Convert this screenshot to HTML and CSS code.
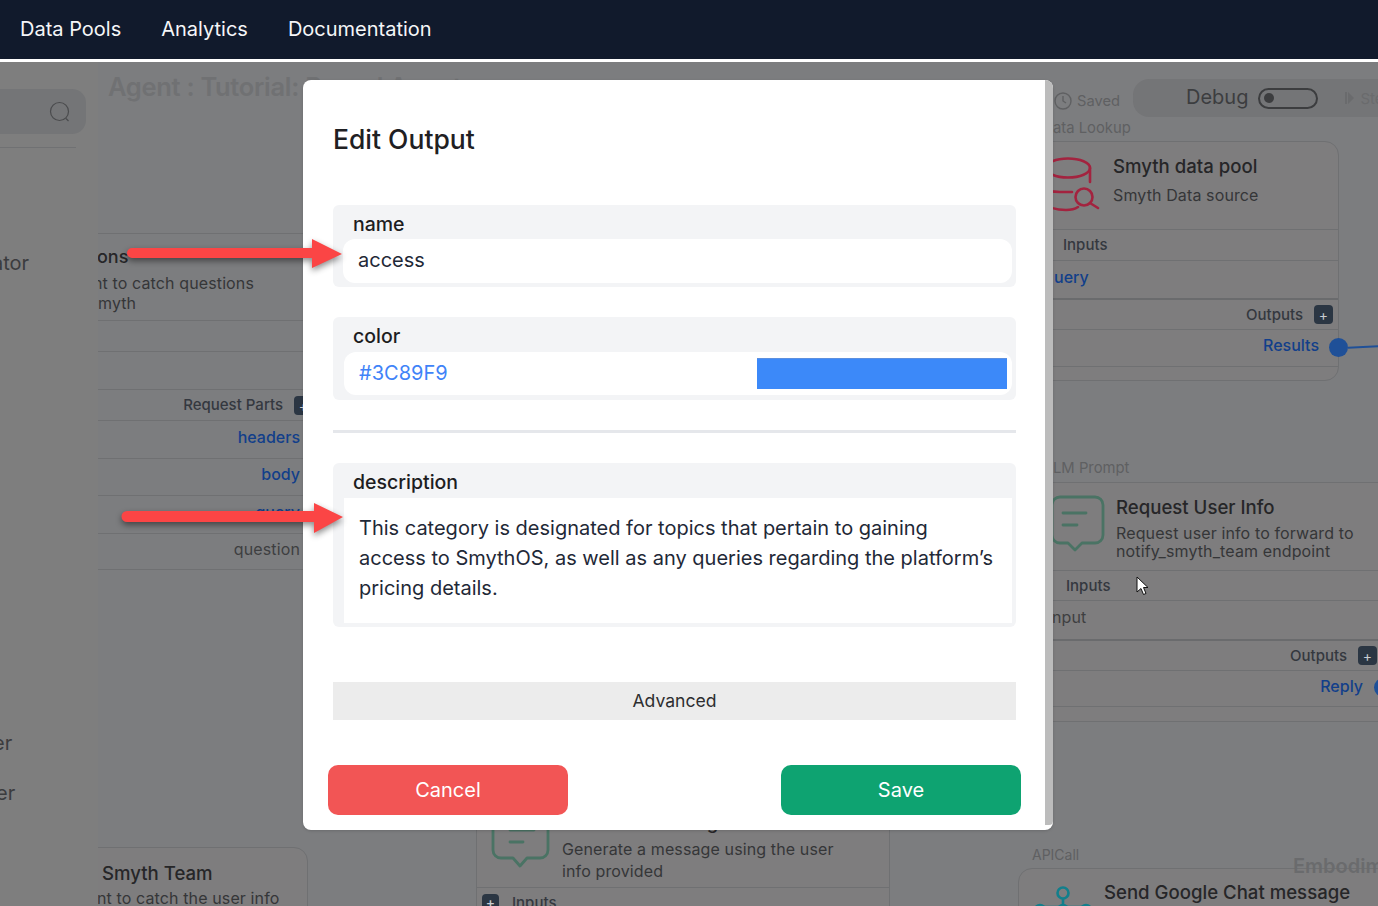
FILE: index.html
```html
<!DOCTYPE html>
<html lang="en">
<head>
    <meta charset="UTF-8">
    <title>Edit Output</title>
    <link rel="stylesheet" href="styles.css">
</head>
<body>

<nav class="topnav">
    <a>Data Pools</a>
    <a>Analytics</a>
    <a>Documentation</a>
</nav>

<main class="canvas">
    <!-- left sidebar, mostly hidden -->
    <aside class="sidebar">
        <div class="search">
            <svg width="24" height="24" viewBox="0 0 24 24" fill="none" stroke="#4a4b4d" stroke-width="1.2"><circle cx="11.500" cy="11.500" r="9"/><path d="M18 18.500l2.500 2.500"/></svg>
        </div>
        <div class="search-line"></div>
        <span class="side-item side-a">ator</span>
        <span class="side-item side-b">er</span>
        <span class="side-item side-c">er</span>
    </aside>

    <h1 class="agent-title">Agent : Tutorial: Bound Agent</h1>

    <!-- left node -->
    <div class="node node-left">
        <div class="left-head">
            <b>ons</b>
            <p>nt to catch questions<br><span class="left-myth">myth</span></p>
        </div>
        <div class="row h31"></div>
        <div class="row h38"></div>
        <div class="row h31 gap"><span class="row-label">Request Parts</span><i class="plus">+</i></div>
        <div class="row h38"><span class="port">headers</span></div>
        <div class="row h37"><span class="port">body</span></div>
        <div class="row h38"><span class="port">query</span></div>
        <div class="row h37"><span class="port-plain">question</span></div>
    </div>

    <div class="node node-team">
        <b>Smyth Team</b>
        <p>nt to catch the user info</p>
    </div>

    <!-- middle node under the dialog -->
    <div class="node node-generate">
        <div class="gen-head">
            <svg class="gen-icon" width="70" height="50" viewBox="0 0 70 50" fill="none" stroke="#4a7364" stroke-width="2.800" stroke-linecap="round" stroke-linejoin="round"><path d="M7 0v30a8 8 0 0 0 8 8h12l7 8 7-8h13a8 8 0 0 0 8-8V0"/><path d="M24 10h24M24 22h13"/></svg>
            <h3>Generate message</h3>
            <p>Generate a message using the user<br>info provided</p>
        </div>
        <div class="gen-inputs"><i class="plus">+</i><span>Inputs</span></div>
    </div>

    <div class="saved">
        <svg width="20" height="20" viewBox="0 0 20 20" fill="none" stroke="#5f6062" stroke-width="1.400"><circle cx="10" cy="10" r="8"/><path d="M10 5v5l3 2"/></svg>
        <span>Saved</span>
    </div>
    <div class="debug-bar">
        <span class="debug-label">Debug</span>
        <span class="toggle"><i></i></span>
        <svg class="step-icon" width="10" height="12" viewBox="0 0 10 12" fill="#6a6b6d"><path d="M0 0h2v12H0zM3 0l6 6-6 6z"/></svg>
        <span class="step">Step</span>
    </div>

    <span class="node-tag tag-lookup">ata Lookup</span>
    <div class="node node-pool">
        <div class="pool-head">
            <svg class="pool-icon" width="60" height="64" viewBox="0 0 60 64" fill="none" stroke="#a3233f" stroke-width="2.600" stroke-linecap="round"><ellipse cx="28" cy="18" rx="22" ry="9.500"/><path d="M50 18v14M0 38c6 3 14 4 20 4h12M0 52c8 6 18 8 26 8 5 0 9-1 12-3"/><circle cx="44" cy="47" r="8.500"/><path d="M50 53l8 5"/></svg>
            <div class="node-text">
                <h3>Smyth data pool</h3>
                <p>Smyth Data source</p>
            </div>
        </div>
        <div class="row h31 indent"><span class="row-label">Inputs</span></div>
        <div class="row h38 indent-port"><span class="port">uery</span></div>
        <div class="row h31 gap thick"><span class="row-label">Outputs</span><i class="plus">+</i></div>
        <div class="row h38 pad-results"><span class="port">Results</span></div>
    </div>
    <span class="dot dot-results"></span>
    <span class="wire"></span>

    <span class="node-tag tag-prompt">LM Prompt</span>
    <div class="node node-request">
        <div class="pool-head req-head">
            <svg class="req-icon" width="70" height="64" viewBox="0 0 70 64" fill="none" stroke="#4a7364" stroke-width="2.800" stroke-linecap="round" stroke-linejoin="round"><path d="M20 7h35a8 8 0 0 1 8 8v30a8 8 0 0 1-8 8H42l-7 7-7-7H20a8 8 0 0 1-8-8V15a8 8 0 0 1 8-8z"/><path d="M23 23h23M23 35h14"/></svg>
            <div class="node-text req-text">
                <h3>Request User Info</h3>
                <p>Request user info to forward to<br>notify_smyth_team endpoint</p>
            </div>
        </div>
        <div class="row h30 indent-req"><span class="row-label">Inputs</span></div>
        <div class="row h39 indent-input"><span class="port-plain">nput</span></div>
        <div class="row h31 gap thick req-outputs"><span class="row-label">Outputs</span><i class="plus">+</i></div>
        <div class="row h37 req-reply"><span class="port">Reply</span></div>
    </div>
    <span class="dot dot-reply"></span>

    <span class="node-tag tag-api">APICall</span>
    <div class="node node-chat">
        <svg class="chat-icon" width="60" height="36" viewBox="0 0 60 36" fill="none" stroke="#127f8c" stroke-width="2.600"><circle cx="30" cy="8" r="5.500"/><path d="M30 14v11M7 22h46"/><circle cx="7" cy="25" r="5"/><circle cx="30" cy="25" r="5"/><circle cx="53" cy="25" r="5"/></svg>
        <h3>Send Google Chat message</h3>
    </div>
    <span class="embodiment">Embodiment</span>

    <!-- mouse pointer from the recording -->
    <svg class="cursor" width="14" height="20" viewBox="0 0 14 20"><path d="M1 1v15l4-3.500 2.500 6 2.500-1-2.500-6H12z" fill="#fff" stroke="#111" stroke-width="1"/></svg>
</main>

<!-- Dialog -->
<section class="modal">
    <h2>Edit Output</h2>

    <div class="field field-name">
        <label>name</label>
        <div class="input">access</div>
    </div>

    <div class="field field-color">
        <label>color</label>
        <div class="input input-color">
            <span>#3C89F9</span>
            <span class="swatch"></span>
        </div>
    </div>

    <hr class="divider">

    <div class="field field-desc">
        <label>description</label>
        <div class="textarea">This category is designated for topics that pertain to gaining access to SmythOS, as well as any queries regarding the platform’s pricing details.</div>
    </div>

    <div class="advanced">Advanced</div>

    <div class="actions">
        <button class="btn btn-cancel">Cancel</button>
        <button class="btn btn-save">Save</button>
    </div>
    <div class="scrollbar"></div>
</section>

<!-- Red annotation arrows -->
<svg class="arrow arrow-name" width="222" height="40" viewBox="0 0 222 40"><path d="M7 12H187V3L217 18 187 32V22H7a5 5 0 0 1 0-10z" fill="#fb4545"/></svg>
<svg class="arrow arrow-desc" width="228" height="40" viewBox="0 0 228 40"><path d="M9 13H196V5L225 19 196 35V24H9a5.500 5.500 0 0 1 0-11z" fill="#fb4545"/></svg>

</body>
</html>
```

FILE: styles.css
```css
* {
    box-sizing: border-box;
}

body {
    margin: 0;
    width: 1378px;
    height: 906px;
    overflow: hidden;
    position: relative;
    background-color: #fff;
    font-family: Inter, "Liberation Sans", sans-serif;
    color: #2c2c2e;
}

/* Top bar */
.topnav {
    height: 59px;
    background-color: #111a2c;
    display: flex;
    align-items: center;
    gap: 40px;
    padding: 0 0 2px 20px;
    color: #f5f6f8;
    font-size: 20px;
    font-weight: 400;
}

/* The dimmed editor behind the dialog */
.canvas {
    position: absolute;
    top: 62px;
    left: 0;
    width: 1378px;
    height: 844px;
    overflow: hidden;
    background-color: #7c7d7f;
}

.sidebar {
    position: absolute;
    z-index: 1;
    top: 0;
    left: 0;
    width: 98px;
    height: 844px;
    overflow: hidden;
    background-color: #7e7e7e;
}

.search {
    position: absolute;
    top: 27px;
    left: 0;
    width: 86px;
    height: 45px;
    background-color: #747577;
    border-radius: 0 14px 14px 0;
    display: flex;
    align-items: center;
    justify-content: flex-end;
    padding-right: 14px;
}

.search-line {
    position: absolute;
    top: 85px;
    left: 0;
    width: 76px;
    height: 1px;
    background-color: #707173;
}

.side-item {
    position: absolute;
    font-size: 20px;
    color: #3b3c3e;
}

.side-a { top: 189px; left: -8px; }
.side-b { top: 669px; left: -7px; }
.side-c { top: 719px; left: -4px; }

.agent-title {
    position: absolute;
    top: 9px;
    left: 108px;
    margin: 0;
    font-size: 25.500px;
    font-weight: 600;
    letter-spacing: -0.3px;
    color: #707173;
    white-space: nowrap;
}

/* Nodes */
.node {
    position: absolute;
    background-color: #7e7d7e;
    border: 1px solid #6f7072;
    border-radius: 14px;
}

.node h3 {
    margin: 0;
    font-size: 18.600px;
    font-weight: 500;
    color: #262628;
}

.node p {
    margin: 0;
    font-size: 16px;
    letter-spacing: 0.12px;
    line-height: 20px;
    color: #353638;
}

.row {
    display: flex;
    align-items: center;
    justify-content: flex-end;
    border-top: 1px solid #6f7072;
    font-size: 16px;
}

.h30 { height: 30px; }
.h31 { height: 31px; }
.h37 { height: 37px; }
.h38 { height: 38px; }
.h39 { height: 39px; }

.gap { gap: 11px; }
.thick { border-top: 2px solid #6a6b6d; }

.row-label {
    padding-bottom: 1px;
    font-size: 15px;
    font-weight: 500;
    color: #34383f;
}

.port {
    padding-bottom: 6px;
    font-size: 16px;
    font-weight: 500;
    color: #123f8a;
}

.port-plain {
    padding-bottom: 6px;
    font-size: 16px;
    letter-spacing: 0.12px;
    color: #3e3f41;
}

.plus {
    flex: none;
    width: 19px;
    height: 19px;
    background-color: #2b3643;
    border-radius: 4px;
    color: #c9ccd0;
    font-style: normal;
    font-size: 14px;
    line-height: 19px;
    text-align: center;
}

.dot {
    position: absolute;
    width: 19px;
    height: 19px;
    border-radius: 50%;
    background-color: #1f5098;
}

.node-left {
    top: 171px;
    left: 98px;
    width: 292px;
    height: 338px;
    overflow: hidden;
    background-color: transparent;
    border: none;
    border-top: 1px solid #6f7072;
    border-radius: 0;
}

.left-head {
    height: 86px;
    padding-top: 12px;
}

.left-head b {
    display: block;
    margin-left: -1px;
    height: 25px;
    font-size: 18px;
    font-weight: 500;
    color: #262628;
}

.left-head p {
    margin-left: -5px;
    margin-top: 2px;
}

.left-myth {
    margin-left: 5px;
}

.node-left .row {
    padding-right: 90px;
}

.node-left .row.gap {
    padding-right: 77px;
}

.node-left .row:last-child {
    border-bottom: 1px solid #6f7072;
}

.node-team {
    top: 785px;
    left: 60px;
    width: 248px;
    height: 100px;
    padding: 13px 0 0 41px;
    overflow: hidden;
}

.node-team b {
    display: block;
    line-height: 24px;
    font-size: 18.600px;
    font-weight: 500;
    color: #262628;
}

.node-team p {
    margin: 3px 0 0 -5px;
    white-space: nowrap;
}

.node-generate {
    top: 700px;
    left: 476px;
    width: 414px;
    height: 170px;
    overflow: hidden;
    border-radius: 0;
    border-top: none;
    border-bottom: none;
}

.gen-head {
    height: 125px;
    position: relative;
    padding-top: 48px;
}

.gen-head h3 {
    margin-left: 85px;
    line-height: 24px;
}

.gen-icon {
    position: absolute;
    top: 58px;
    left: 9px;
}

.gen-head p {
    margin-left: 85px;
    margin-top: 4px;
    line-height: 22px;
}

.gen-inputs {
    border-top: 1px solid #6f7072;
    display: flex;
    align-items: center;
    gap: 13px;
    padding: 5px 0 0 5px;
    font-size: 15px;
    font-weight: 500;
    color: #34383f;
}

.gen-inputs .plus {
    width: 17px;
    height: 17px;
    line-height: 17px;
}

.saved {
    position: absolute;
    top: 29px;
    left: 1053px;
    display: flex;
    align-items: center;
    gap: 4px;
    font-size: 14.700px;
    color: #5f6062;
}

.debug-bar {
    position: absolute;
    top: 17px;
    left: 1133px;
    width: 300px;
    height: 38px;
    background-color: #747577;
    border-radius: 16px;
    display: flex;
    align-items: center;
    padding-left: 53px;
    white-space: nowrap;
}

.debug-label {
    padding-bottom: 2px;
    font-size: 20px;
    color: #3c3d3f;
}

.toggle {
    margin-left: 10px;
    width: 60px;
    height: 21px;
    border: 2px solid #3c3d3f;
    border-radius: 11px;
    display: flex;
    align-items: center;
    padding-left: 4px;
}

.toggle i {
    width: 10px;
    height: 10px;
    border-radius: 50%;
    background-color: #3c3d3f;
}

.step-icon {
    margin-left: 27px;
}

.step {
    margin-left: 5px;
    font-size: 15px;
    color: #6a6b6d;
}

.node-tag {
    position: absolute;
    font-size: 14.800px;
    color: #5f6062;
}

.tag-lookup { top: 57px; left: 1053px; }
.tag-prompt { top: 397px; left: 1053px; }
.tag-api { top: 784px; left: 1032px; font-size: 14px; }

.embodiment {
    position: absolute;
    top: 792px;
    left: 1293px;
    font-size: 20px;
    font-weight: 600;
    color: #6a6b6d;
}

.node-pool {
    top: 79px;
    left: 1000px;
    width: 339px;
    height: 240px;
}

.pool-head {
    height: 87px;
    position: relative;
    padding: 13px 0 0 112px;
}

.pool-icon {
    position: absolute;
    top: 8px;
    left: 39px;
}

.node-text p {
    margin-top: 8px;
}

.indent, .indent-port {
    justify-content: flex-start;
}

.indent { padding-left: 62px; }
.indent-port { padding-left: 53px; }

.node-pool .gap {
    padding-right: 5px;
}

.pad-results {
    padding-right: 19px;
}

.node-pool .row:last-child {
    border-bottom: 1px solid #6f7072;
}

.dot-results {
    top: 276px;
    left: 1329px;
}

.wire {
    position: absolute;
    top: 284px;
    left: 1348px;
    width: 32px;
    height: 2px;
    background-color: #1f5098;
    transform: rotate(-3deg);
}

.node-request {
    top: 420px;
    left: 1000px;
    width: 420px;
    height: 240px;
}

.req-head {
    padding: 13px 0 0 115px;
}

.req-icon {
    position: absolute;
    top: 7px;
    left: 39px;
}

.req-text p {
    margin-top: 6px;
    line-height: 18px;
}

.indent-req, .indent-input {
    justify-content: flex-start;
}

.indent-req { padding-left: 65px; }
.indent-input { padding-left: 51px; }

.req-outputs {
    padding-right: 42px;
}

.req-reply {
    padding-right: 56px;
    border-bottom: 1px solid #6f7072;
}

.dot-reply {
    top: 616px;
    left: 1374px;
}

.node-chat {
    top: 806px;
    left: 1018px;
    width: 400px;
    height: 100px;
    padding: 12px 0 0 85px;
}

.chat-icon {
    position: absolute;
    top: 16px;
    left: 14px;
    overflow: visible;
}

.cursor {
    position: absolute;
    top: 514px;
    left: 1136px;
}

/* Dialog */
.modal {
    position: absolute;
    top: 80px;
    left: 303px;
    width: 750px;
    height: 750px;
    background-color: #fff;
    border-radius: 8px;
    padding: 42px 37px 0 30px;
    box-shadow: 0 1px 3px rgba(0, 0, 0, 0.15);
    overflow: hidden;
}

.modal h2 {
    margin: 0 0 49px;
    font-size: 26.500px;
    line-height: 34px;
    font-weight: 500;
    color: #1f2023;
}

.field {
    background-color: #f3f4f6;
    border-radius: 6px;
    padding: 8px 4px 4px 10px;
}

.field label {
    display: block;
    height: 26px;
    line-height: 22px;
    padding-left: 10px;
    font-size: 19.500px;
    font-weight: 500;
    color: #1d1d1f;
}

.field-name {
    height: 82px;
    margin-bottom: 30px;
}

.input {
    height: 44px;
    background-color: #fff;
    border-radius: 12px;
    padding-left: 15px;
    font-size: 20px;
    line-height: 43px;
    color: #1f2937;
}

.field-color {
    height: 83px;
    padding-left: 11px;
}

.field-color label, .field-desc label {
    height: 27px;
    padding-left: 9px;
}

.input-color {
    height: 43px;
    display: flex;
    justify-content: space-between;
    align-items: center;
    padding-right: 5px;
    color: #3f83f8;
}

.swatch {
    width: 250px;
    height: 31px;
    background-color: #3c89f9;
    border-top: 1px solid #5d90df;
}

.divider {
    margin: 30px 0;
    height: 3px;
    border: none;
    background-color: #e5e7eb;
}

.field-desc {
    height: 164px;
    padding-left: 11px;
}

.textarea {
    height: 125px;
    background-color: #fff;
    padding: 15px 15px 0 15px;
    font-size: 20px;
    line-height: 30px;
    color: #1f2937;
}

.advanced {
    margin-top: 55px;
    height: 38px;
    background-color: #ececec;
    text-align: center;
    font-size: 17.600px;
    line-height: 38px;
    color: #2e2e30;
}

.actions {
    margin: 45px -5px 0;
    display: flex;
    justify-content: space-between;
}

.btn {
    width: 240px;
    height: 50px;
    border: none;
    border-radius: 10px;
    color: #fff;
    font-family: inherit;
    font-size: 20px;
}

.btn-cancel { background-color: #f25555; }
.btn-save { background-color: #0ea371; }

.scrollbar {
    position: absolute;
    top: 0;
    right: 0;
    width: 8px;
    height: 745px;
    border-radius: 0 4px 4px 0;
    background-color: #bcbcbc;
}

/* Annotation arrows */
.arrow {
    position: absolute;
    filter: drop-shadow(0 3px 3px rgba(0, 0, 0, 0.45));
}

.arrow-name {
    top: 236px;
    left: 125px;
}

.arrow-desc {
    top: 498px;
    left: 118px;
}
```
